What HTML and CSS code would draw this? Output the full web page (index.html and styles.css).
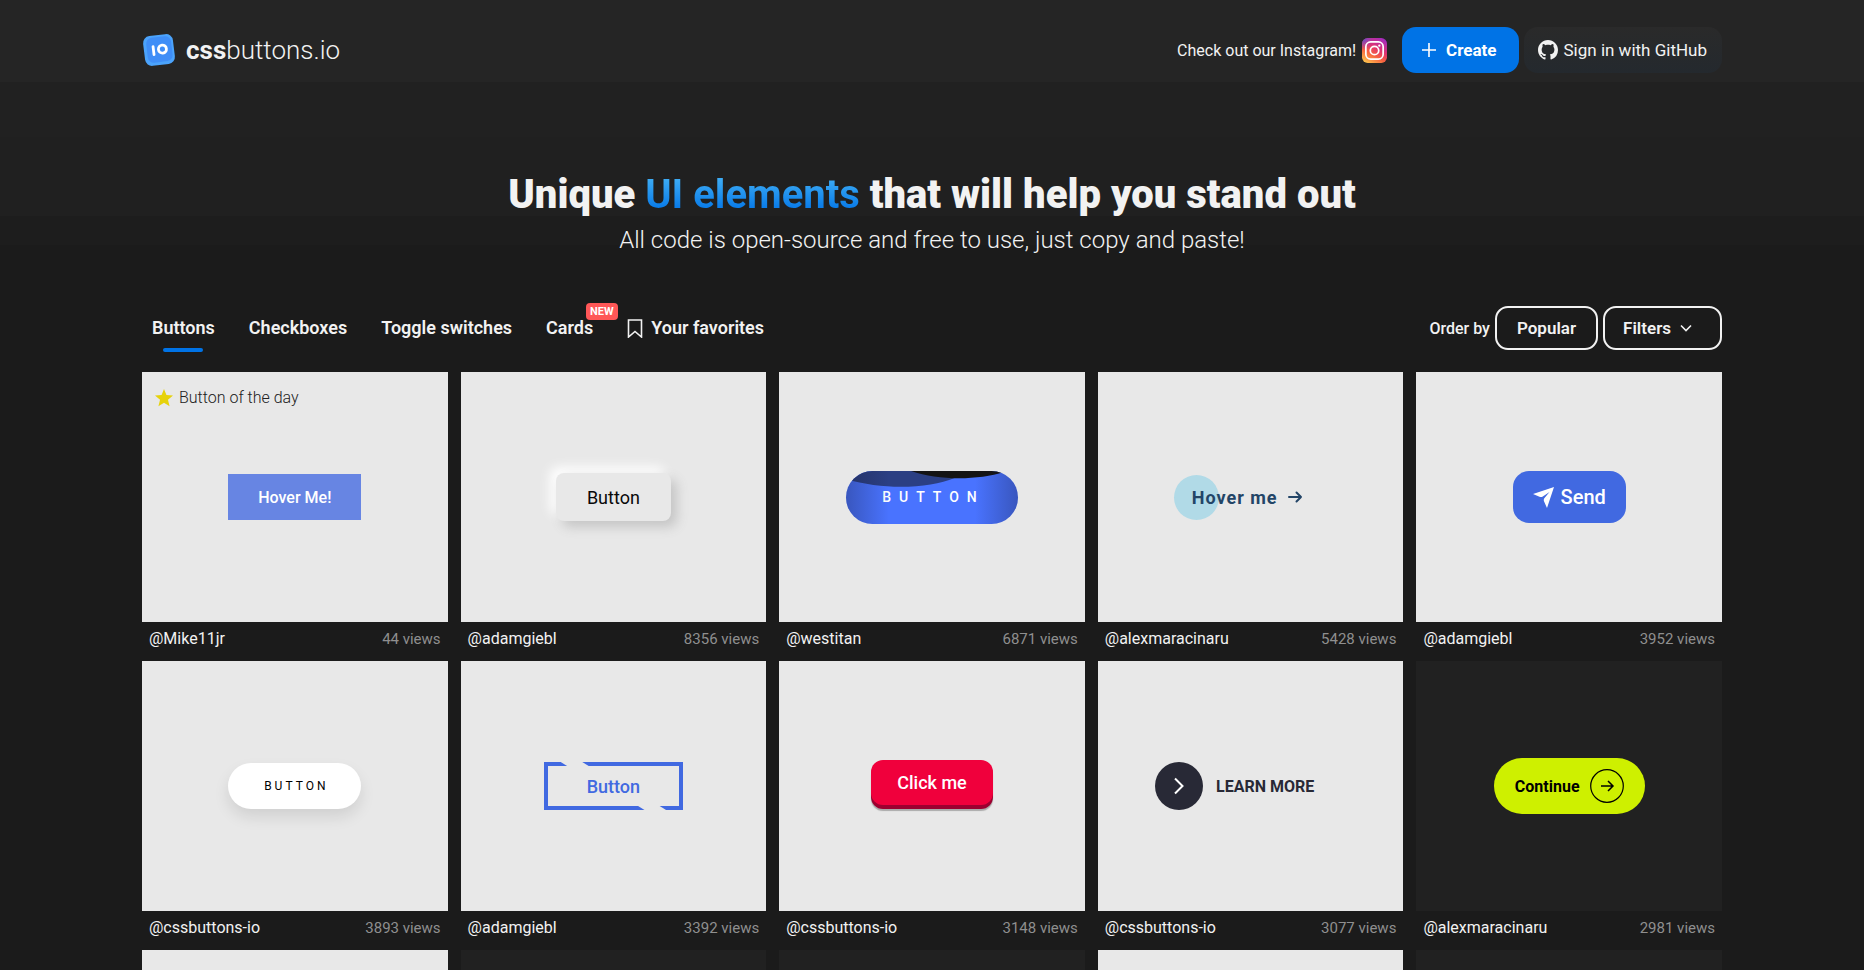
FILE: index.html
```html
<!DOCTYPE html>
<html lang="en">
<head>
<meta charset="utf-8">
<title>cssbuttons.io</title>
<link rel="stylesheet" href="styles.css">
</head>
<body>
<div class="page">
  <header class="header">
    <a class="logo" href="#">
      <svg class="logo-mark" viewBox="0 0 34 34" aria-hidden="true"><g transform="rotate(-7 17 17)"><rect x="2" y="2" width="30" height="30" rx="7" fill="#4ba3fb"/><rect x="5" y="4" width="25" height="25" rx="6" fill="#3f8ef7"/><path d="M11.500 13v8" stroke="#fff" stroke-width="2.800" stroke-linecap="round"/><circle cx="20.500" cy="16.500" r="4" fill="none" stroke="#fff" stroke-width="2.800"/></g></svg>
      <span class="logo-text"><b>css</b>buttons.io</span>
    </a>
    <nav class="actions">
      <a class="insta" href="#">Check out our Instagram!
        <svg width="25" height="25" viewBox="0 0 26 26" aria-hidden="true"><defs><linearGradient id="ig" x1="0.2" y1="1" x2="0.8" y2="0"><stop offset="0" stop-color="#fdc04c"/><stop offset="0.35" stop-color="#f7603f"/><stop offset="0.6" stop-color="#e0336f"/><stop offset="1" stop-color="#a42bc0"/></linearGradient><radialGradient id="ib" cx="0" cy="0" r="0.5"><stop offset="0" stop-color="#4b5bd7"/><stop offset="1" stop-color="#8a3ac8" stop-opacity="0"/></radialGradient></defs><rect width="26" height="26" rx="6" fill="url(#ig)"/><rect width="26" height="26" rx="6" fill="url(#ib)"/><g fill="none" stroke="#fff" stroke-width="1.800"><rect x="4" y="4" width="18" height="18" rx="5"/><circle cx="13" cy="13" r="4.400"/></g><circle cx="18" cy="8" r="1.200" fill="#fff"/></svg>
      </a>
      <button class="create"><svg width="14" height="14" viewBox="0 0 14 14" aria-hidden="true"><path d="M7 0v14M0 7h14" stroke="#fff" stroke-width="1.600"/></svg>Create</button>
      <button class="signin"><svg width="20" height="20" viewBox="0 0 16 16" aria-hidden="true"><path fill="#f2f2f2" d="M8 0C3.580 0 0 3.580 0 8c0 3.540 2.290 6.530 5.470 7.590.4.070.550-.170.550-.380 0-.190-.010-.820-.010-1.490-2.010.370-2.530-.490-2.690-.940-.090-.230-.480-.940-.820-1.130-.280-.150-.680-.520-.010-.530.630-.010 1.080.580 1.230.820.720 1.210 1.870.870 2.330.660.070-.520.280-.870.510-1.070-1.780-.200-3.640-.890-3.640-3.950 0-.870.310-1.590.820-2.150-.080-.200-.360-1.020.080-2.120 0 0 .670-.210 2.200.820.640-.180 1.320-.270 2-.270s1.360.090 2 .270c1.530-1.040 2.200-.820 2.200-.820.440 1.100.160 1.920.080 2.120.510.560.820 1.270.820 2.150 0 3.070-1.870 3.750-3.650 3.950.290.250.540.730.540 1.480 0 1.070-.010 1.930-.010 2.200 0 .210.150.460.550.380A8.010 8.010 0 0 0 16 8c0-4.420-3.580-8-8-8z"/></svg>Sign in with GitHub</button>
    </nav>
  </header>

  <section class="hero">
    <h1>Unique <span class="accent">UI elements</span> that will help you stand out</h1>
    <p>All code is open-source and free to use, just copy and paste!</p>
  </section>

  <div class="toolbar">
    <nav class="tabs">
      <a class="tab active" href="#">Buttons</a>
      <a class="tab" href="#">Checkboxes</a>
      <a class="tab" href="#">Toggle switches</a>
      <a class="tab" href="#">Cards<span class="badge">NEW</span></a>
      <a class="tab fav" href="#"><svg width="16" height="19" viewBox="0 0 16 19" aria-hidden="true"><path d="M1.500 1h13v17L8 12.500 1.500 18z" fill="none" stroke="#f2f2f2" stroke-width="1.600"/></svg>Your favorites</a>
    </nav>
    <div class="order">
      <span>Order by</span>
      <button class="pill">Popular</button>
      <button class="pill filters">Filters<svg width="12" height="8" viewBox="0 0 12 8" aria-hidden="true"><path d="M1 1.500l5 5 5-5" fill="none" stroke="#f2f2f2" stroke-width="1.600"/></svg></button>
    </div>
  </div>

  <main class="grid">
    <article class="card">
      <div class="preview"><span class="day"><svg width="18" height="18" viewBox="0 0 20 20" aria-hidden="true"><path fill="#e6d20a" d="M10 0l2.700 6.700 7.300.6-5.600 4.700 1.800 7.200L10 15.300l-6.200 3.900L5.600 12 0 7.300l7.300-.6z"/></svg>Button of the day</span>
        <button class="b-hover">Hover Me!</button></div>
      <div class="meta"><a href="#">@Mike11jr</a><span>44 views</span></div>
    </article>
    <article class="card">
      <div class="preview"><button class="b-neu">Button</button></div>
      <div class="meta"><a href="#">@adamgiebl</a><span>8356 views</span></div>
    </article>
    <article class="card">
      <div class="preview"><button class="b-wave"><svg class="waves" viewBox="0 0 174 53" preserveAspectRatio="none" aria-hidden="true"><path d="M0 0H110V7C85 17 40 20 0 8z" fill="#2b3f83"/><path d="M66 0C95 10 135 9 160 1V0z" fill="#141414"/></svg><span>BUTTON</span></button></div>
      <div class="meta"><a href="#">@westitan</a><span>6871 views</span></div>
    </article>
    <article class="card">
      <div class="preview"><button class="b-circle">Hover me<svg width="15" height="12" viewBox="0 0 15 12" aria-hidden="true"><path d="M1 6h12M8.500 1.500L13 6l-4.500 4.500" fill="none" stroke="#234567" stroke-width="2" stroke-linecap="round" stroke-linejoin="round"/></svg></button></div>
      <div class="meta"><a href="#">@alexmaracinaru</a><span>5428 views</span></div>
    </article>
    <article class="card">
      <div class="preview"><button class="b-send"><svg width="21" height="21" viewBox="0 0 21 21" aria-hidden="true"><path fill="#fff" d="M21 0L0 7l6.500 2.800c1.100.5 2.300.4 3.300-.2L16.500 5 11.300 11.300c-.6 1-.7 2.200-.2 3.200L14 21z"/></svg>Send</button></div>
      <div class="meta"><a href="#">@adamgiebl</a><span>3952 views</span></div>
    </article>

    <article class="card">
      <div class="preview"><button class="b-white">BUTTON</button></div>
      <div class="meta"><a href="#">@cssbuttons-io</a><span>3893 views</span></div>
    </article>
    <article class="card">
      <div class="preview"><button class="b-outline">Button</button></div>
      <div class="meta"><a href="#">@adamgiebl</a><span>3392 views</span></div>
    </article>
    <article class="card">
      <div class="preview"><button class="b-push">Click me</button></div>
      <div class="meta"><a href="#">@cssbuttons-io</a><span>3148 views</span></div>
    </article>
    <article class="card">
      <div class="preview"><button class="b-learn"><span class="disc"><svg width="12" height="18" viewBox="0 0 12 18" aria-hidden="true"><path d="M2 1.500L9.500 9 2 16.500" fill="none" stroke="#fff" stroke-width="2"/></svg></span>LEARN MORE</button></div>
      <div class="meta"><a href="#">@cssbuttons-io</a><span>3077 views</span></div>
    </article>
    <article class="card">
      <div class="preview dark"><button class="b-continue">Continue<svg width="34" height="34" viewBox="0 0 34 34" aria-hidden="true"><g fill="none" stroke="#000"><circle cx="17" cy="17" r="16.300" stroke-width="1.200"/><path d="M11 17h11.500M18 12l5 5-5 5" stroke-width="1.500"/></g></svg></button></div>
      <div class="meta"><a href="#">@alexmaracinaru</a><span>2981 views</span></div>
    </article>

    <article class="card"><div class="preview"></div></article>
    <article class="card"><div class="preview dark"></div></article>
    <article class="card"><div class="preview dark"></div></article>
    <article class="card"><div class="preview"></div></article>
    <article class="card"><div class="preview dark"></div></article>
  </main>
</div>
</body>
</html>
```
FILE: styles.css
```css
* { box-sizing: border-box; }

body {
  margin: 0;
  height: 100vh;
  overflow: hidden;
  font-family: Roboto, "Liberation Sans", sans-serif;
  font-size: 16px;
  color: #f2f2f2;
  background: #1b1b1b linear-gradient(#252525 0 82px, #212121 82px 137px, #202020 137px 216px, #1d1d1d 216px 245px, #1b1b1b 245px);
}

a { color: inherit; text-decoration: none; }
button { font: inherit; color: inherit; border: 0; margin: 0; padding: 0; background: none; cursor: pointer; }
svg { display: block; flex: none; }

.page { width: 85%; max-width: 1580px; margin: 0 auto; }

.header { display: flex; justify-content: space-between; align-items: center; padding-top: 27px; }
.logo { display: flex; align-items: center; gap: 10px; }
.logo-mark { width: 34px; height: 34px; }
.logo-text { font-size: 26px; line-height: 32px; font-weight: 300; }
.logo-text b { font-weight: 700; }

.actions { display: flex; align-items: center; gap: 5px; }
.insta { display: flex; align-items: center; gap: 6px; margin-right: 10px; font-size: 16px; }
.create, .signin { display: flex; align-items: center; height: 46px; border-radius: 14px; font-size: 17px; }
.create { gap: 10px; padding: 0 22px 0 20px; background: #0073e6; font-weight: 700; color: #fff; }
.signin { gap: 6px; padding: 0 15px 0 14px; background: linear-gradient(#2a2a2a, #24292e); }

.hero { text-align: center; padding-top: 98px; }
.hero h1 { margin: 0; font-size: 40px; line-height: 48px; font-weight: 900; }
.accent { background: linear-gradient(#42b0f5 10%, #0073e6 90%); background-clip: text; -webkit-background-clip: text; color: transparent; font-weight: 700; }
.hero p { margin: 5px 0 0; font-size: 24px; line-height: 32px; font-weight: 300; }

.toolbar { display: flex; justify-content: space-between; align-items: center; margin-top: 50px; }
.tabs { display: flex; gap: 34px; padding-left: 10px; }
.tab { position: relative; font-size: 18px; line-height: 24px; font-weight: 600; }
.active::after { content: ""; position: absolute; left: 50%; bottom: -12px; width: 40px; height: 4px; margin-left: -20px; border-radius: 2px; background: #0073e6; }
.badge { position: absolute; left: 40px; top: -13px; padding: 0 4px; border-radius: 4px; background: #ff5757; color: #fff; font-size: 11px; line-height: 17px; font-weight: 700; }
.fav { display: flex; align-items: center; gap: 8px; }
.order { display: flex; align-items: center; gap: 5px; font-weight: 500; }
.pill { height: 44px; padding: 0 20px; border: 2px solid #f2f2f2; border-radius: 13px; font-size: 17px; font-weight: 600; }
.filters { display: flex; align-items: center; gap: 9px; padding: 0 28px 0 18px; }

.grid { display: grid; grid-template-columns: repeat(5, minmax(0, 1fr)); gap: 13px; margin-top: 22px; }
.preview { position: relative; display: flex; align-items: center; justify-content: center; min-height: 250px; background: #e8e8e8; color: #212121; }
.dark { background: #212121; }
.meta { display: flex; justify-content: space-between; align-items: flex-end; padding: 0 7px; height: 26px; line-height: 18px; }
.meta span { font-size: 15px; color: #8f8f8f; }
.day { position: absolute; left: 13px; top: 15px; display: flex; align-items: center; gap: 6px; font-weight: 300; line-height: 22px; }

.b-hover { padding: 0 30px; height: 46px; background: #6785e3; color: #fff; font-weight: 500; }
.b-neu { height: 48px; padding: 0 31px; border-radius: 8px; background: #e8e8e8; color: #090909; font-size: 18px; box-shadow: 6px 6px 12px #c5c5c5, -6px -6px 12px #fff; }
.b-wave { position: relative; overflow: hidden; height: 53px; padding: 0 33px 0 36px; border-radius: 27px; background: #4973ff; color: #fff; font-size: 14px; font-weight: 500; letter-spacing: 8px; }
.b-wave::after { content: ""; position: absolute; inset: 0; background: linear-gradient(90deg, rgba(20,20,40,.3), transparent 25%, transparent 75%, rgba(20,20,40,.3)); }
.waves { position: absolute; inset: 0; width: 100%; height: 100%; }
.b-wave span { position: relative; }
.b-circle { position: relative; display: flex; align-items: center; gap: 10px; padding: 0 19px 0 18px; height: 45px; margin-right: 6px; color: #234567; font-size: 18px; font-weight: 700; letter-spacing: 1px; z-index: 0; }
.b-circle::before { content: ""; position: absolute; z-index: -1; left: 0; top: 0; width: 45px; height: 45px; border-radius: 50%; background: #b1dae7; }
.b-send { display: flex; align-items: center; gap: 7px; height: 52px; padding: 0 20px; border-radius: 16px; background: #4169e1; color: #fff; font-size: 20px; font-weight: 500; }
.b-white { height: 46px; padding: 0 33px 0 36px; border-radius: 23px; background: #fff; color: #000; font-size: 12px; font-weight: 400; letter-spacing: 3px; box-shadow: 0 8px 15px rgba(0,0,0,.1); }
.b-outline { position: relative; height: 48px; padding: 0 39px; border: 4px solid #4169e1; color: #4169e1; font-size: 18px; font-weight: 500; }
.b-outline::before, .b-outline::after { content: ""; position: absolute; width: 28px; height: 4px; background: #e8e8e8; clip-path: polygon(0 0, 77% 0, 100% 100%, 23% 100%); }
.b-outline::before { left: 13px; top: -4px; }
.b-outline::after { right: 13px; bottom: -4px; }
.b-push { height: 45px; padding: 0 26px; margin-bottom: 8px; border-radius: 12px; background: #f0003c; color: #fff; font-size: 18px; font-weight: 500; box-shadow: 0 4px 0 #9c0030, 0 6px 1px #aaa; }
.b-learn { display: flex; align-items: center; gap: 13px; margin-right: 32px; color: #282936; font-weight: 700; }
.disc { display: flex; align-items: center; justify-content: center; width: 48px; height: 48px; border-radius: 50%; background: #282936; }
.b-continue { display: flex; align-items: center; gap: 10px; height: 56px; padding: 0 21px; border-radius: 28px; background: #cef000; color: #000; font-size: 16px; font-weight: 700; }
```
